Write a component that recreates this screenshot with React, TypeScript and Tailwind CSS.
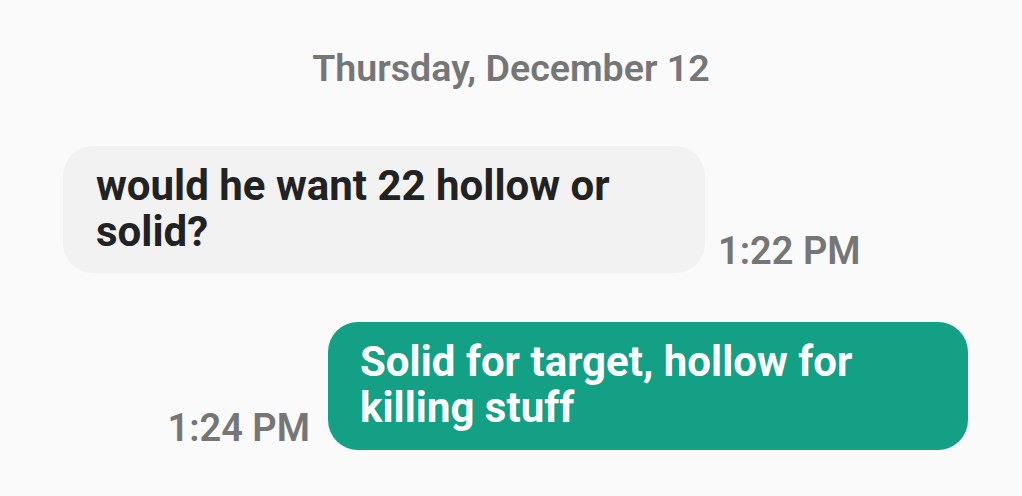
import React from 'react';

type Msg = { text: React.ReactNode; time: string; mine: boolean };

const messages: Msg[] = [
  { text: <>would he want 22 hollow or<br />solid?</>, time: '1:22 PM', mine: false },
  { text: <>Solid for target, hollow for<br />killing stuff</>, time: '1:24 PM', mine: true },
];

const App: React.FC = () => {
  return (
    <div className="w-[1022px] h-[496px] bg-[#fafafa] overflow-hidden font-['Roboto',sans-serif]">
      <div className="pt-[45px] text-center text-[37.6px] leading-[46px] font-semibold text-[#767676]">
        Thursday, December 12
      </div>

      <div className="mt-[55px] flex flex-col gap-[49px]">
        {messages.map((m, i) =>
          m.mine ? (
            <div key={i} className="flex justify-end items-end pr-[54px] gap-[18px]">
              <span className="text-[38px] leading-[44px] font-semibold text-[#767676]">{m.time}</span>
              <div className="w-[640px] h-[128px] rounded-[30px] bg-[#13a085] text-white pl-[32px] pt-[17px] text-[42px] leading-[46px] font-bold">
                {m.text}
              </div>
            </div>
          ) : (
            <div key={i} className="flex items-end pl-[63px] gap-[13px]">
              <div className="w-[642px] h-[127px] rounded-[30px] bg-[#f2f2f2] text-[#222222] pl-[33px] pt-[17px] text-[42px] leading-[46px] font-bold">
                {m.text}
              </div>
              <span className="text-[38px] leading-[44px] font-semibold text-[#767676]">{m.time}</span>
            </div>
          )
        )}
      </div>
    </div>
  );
};

export default App;
